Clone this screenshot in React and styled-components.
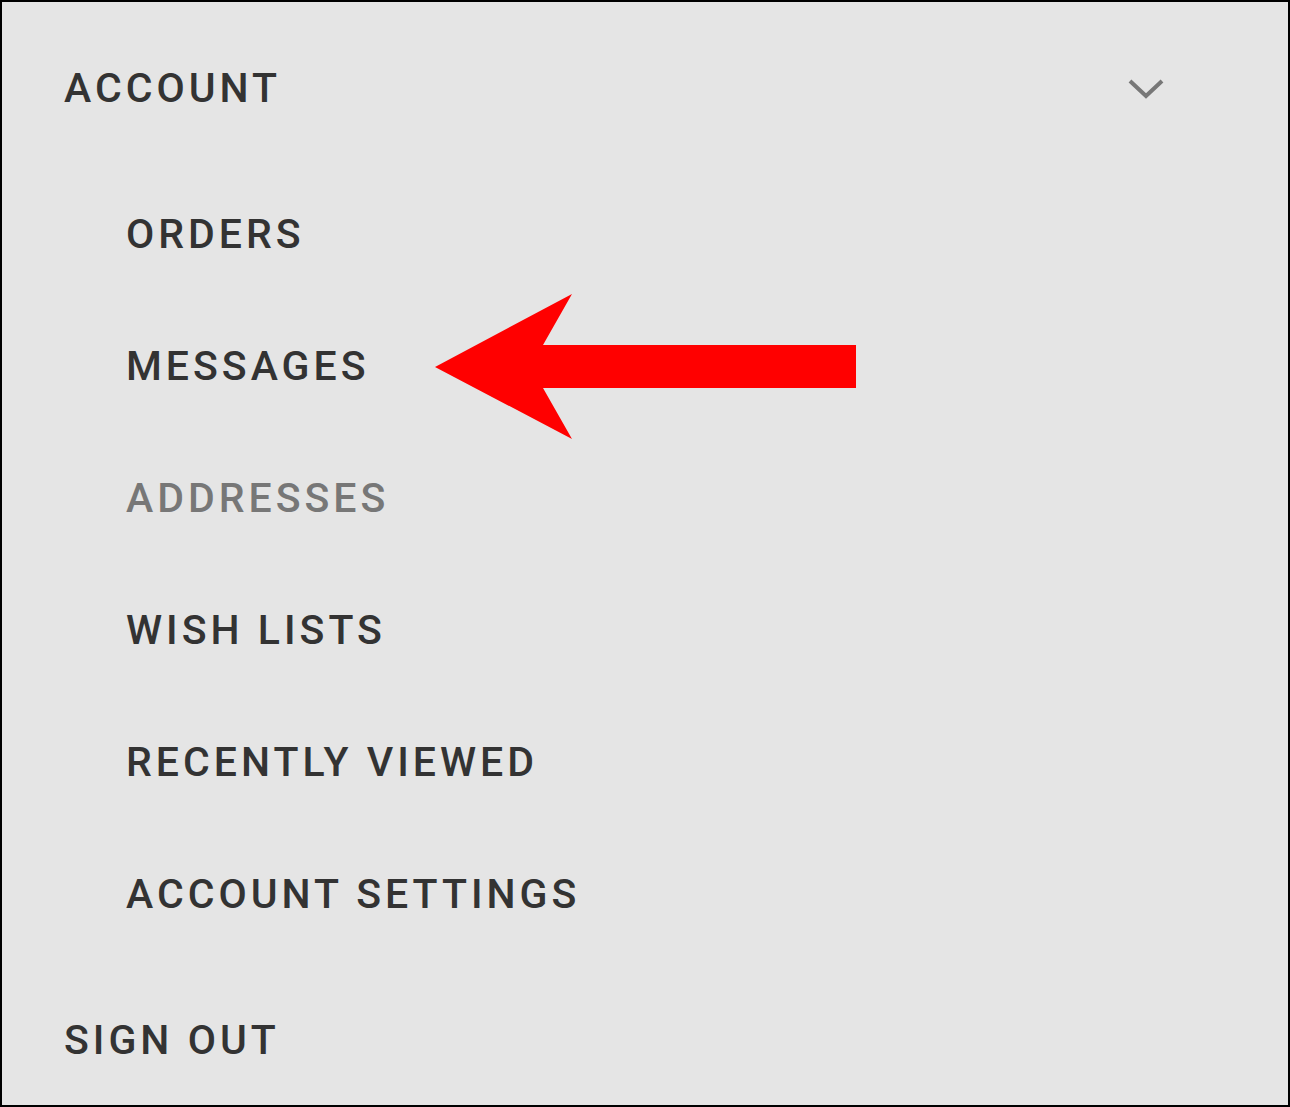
import React from 'react';
import styled, { createGlobalStyle } from 'styled-components';

const GlobalStyle = createGlobalStyle`
  html, body {
    margin: 0;
    padding: 0;
    background: #e5e5e5;
  }
  * { box-sizing: border-box; }
`;

const items = [
  { label: 'ORDERS' },
  { label: 'MESSAGES', pointed: true },
  { label: 'ADDRESSES', muted: true },
  { label: 'WISH LISTS' },
  { label: 'RECENTLY VIEWED' },
  { label: 'ACCOUNT SETTINGS' },
];

export default function App() {
  return (
    <>
      <GlobalStyle />
      <Panel>
        <Header>
          <TopLabel>ACCOUNT</TopLabel>
          <Chevron viewBox="0 0 36 22" aria-hidden="true">
            <polyline points="2,3 18,18 34,3" />
          </Chevron>
        </Header>

        <SubList>
          {items.map((item) => (
            <SubRow key={item.label}>
              <SubLabel $muted={item.muted}>{item.label}</SubLabel>
              {item.pointed && (
                <Arrow viewBox="0 0 422 146" aria-hidden="true">
                  <polygon points="0,73 137,0 108,51 421,51 421,94 108,94 137,145" />
                </Arrow>
              )}
            </SubRow>
          ))}
        </SubList>

        <SignOut>SIGN OUT</SignOut>
      </Panel>
    </>
  );
}

const Panel = styled.div`
  width: 1290px;
  height: 1107px;
  border: 2px solid #000;
  background: #e5e5e5;
  display: flex;
  flex-direction: column;
  padding: 22px 0 0 62px;
  font-family: Roboto, "Liberation Sans", sans-serif;
  color: #333;
`;

const Header = styled.div`
  display: flex;
  align-items: center;
  justify-content: space-between;
  height: 132px;
  padding-right: 124px;
`;

const TopLabel = styled.div`
  font-size: 41px;
  font-weight: 500;
  letter-spacing: 4px;
  line-height: 1;
`;

const Chevron = styled.svg`
  width: 36px;
  height: 22px;
  fill: none;
  stroke: #777;
  stroke-width: 4;
`;

const SubList = styled.ul`
  list-style: none;
  margin: 15px 0 0;
  padding: 0 0 0 62px;
  display: flex;
  flex-direction: column;
`;

const SubRow = styled.li`
  position: relative;
  height: 132px;
  display: flex;
  align-items: center;
`;

const SubLabel = styled.span`
  font-size: 41px;
  font-weight: 500;
  letter-spacing: 4px;
  line-height: 1;
  color: ${({ $muted }) => ($muted ? '#777' : '#333')};
`;

const Arrow = styled.svg`
  position: absolute;
  left: 309px;
  top: 50%;
  margin-top: -72px;
  width: 422px;
  height: 146px;
  fill: #ff0000;
`;

const SignOut = styled.div`
  margin-top: 16px;
  height: 132px;
  display: flex;
  align-items: center;
  font-size: 41px;
  font-weight: 500;
  letter-spacing: 4px;
  line-height: 1;
`;
